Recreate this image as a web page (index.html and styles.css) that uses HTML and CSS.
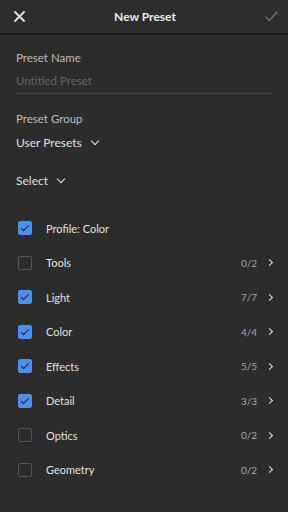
FILE: index.html
```html
<!DOCTYPE html>
<html lang="en">
<head>
  <meta charset="UTF-8" />
  <title>New Preset</title>
  <meta name="viewport" content="width=device-width, initial-scale=1" />
  <link rel="stylesheet" href="styles.css">
</head>
<body>
  <header class="top-bar">
    <button class="icon-btn" aria-label="Close">
      <svg width="11" height="11" viewBox="0 0 11 11"><path d="M1 1L10 10M10 1L1 10" stroke="#e6e6e6" stroke-width="1.8" stroke-linecap="round"/></svg>
    </button>
    <div class="title">New Preset</div>
    <button class="icon-btn" aria-label="Done">
      <svg width="13" height="11" viewBox="0 0 13 11"><path d="M1 6L4.5 9.5L12 1" fill="none" stroke="#6e6e6e" stroke-width="1.5" stroke-linecap="round" stroke-linejoin="round"/></svg>
    </button>
  </header>

  <main class="content">
    <div class="field">
      <div class="field-label">Preset Name</div>
      <div class="text-input">Untitled Preset</div>
    </div>

    <div class="field group">
      <div class="field-label">Preset Group</div>
      <div class="dropdown">User Presets <span class="chev-down"></span></div>
    </div>

    <div class="dropdown select">Select <span class="chev-down"></span></div>

    <ul class="settings">
      <li class="row"><span class="check on"></span><span class="name">Profile: Color</span></li>
      <li class="row"><span class="check"></span><span class="name">Tools</span><span class="count">0/2</span><span class="chev-right"></span></li>
      <li class="row"><span class="check on"></span><span class="name">Light</span><span class="count">7/7</span><span class="chev-right"></span></li>
      <li class="row"><span class="check on"></span><span class="name">Color</span><span class="count">4/4</span><span class="chev-right"></span></li>
      <li class="row"><span class="check on"></span><span class="name">Effects</span><span class="count">5/5</span><span class="chev-right"></span></li>
      <li class="row"><span class="check on"></span><span class="name">Detail</span><span class="count">3/3</span><span class="chev-right"></span></li>
      <li class="row"><span class="check"></span><span class="name">Optics</span><span class="count">0/2</span><span class="chev-right"></span></li>
      <li class="row"><span class="check"></span><span class="name">Geometry</span><span class="count">0/2</span><span class="chev-right"></span></li>
    </ul>
  </main>
</body>
</html>
```

FILE: styles.css
```css
:root {
  --bg: #2c2c2c;
  --header-bg: #2e2e2e;
  --divider: #1c1c1c;
  --text: #e0e0e0;
  --label: #bdbdbd;
  --muted: #666;
  --blue: #4b8ff0;
}

* {
  box-sizing: border-box;
  margin: 0;
  padding: 0;
}

body {
  font-family: 'Lato', 'Noto Sans', sans-serif;
  background: var(--bg);
  color: var(--text);
  width: 288px;
  height: 512px;
  overflow: hidden;
}

.top-bar {
  height: 35px;
  background: var(--header-bg);
  border-bottom: 2px solid var(--divider);
  display: flex;
  align-items: center;
  justify-content: space-between;
  padding: 0 10px 0 12px;
}

.icon-btn {
  background: none;
  border: none;
  width: 14px;
  height: 14px;
  display: flex;
  align-items: center;
  justify-content: center;
}

.title {
  font-size: 12px;
  font-weight: 700;
  color: #ececec;
}

.content {
  padding: 0 16px;
}

.field {
  padding-top: 15px;
}

.field-label {
  font-size: 11.5px;
  line-height: 16px;
  color: var(--label);
}

.text-input {
  font-size: 11.5px;
  line-height: 16px;
  color: var(--muted);
  margin-top: 7px;
  padding-bottom: 4px;
  border-bottom: 1px solid #464646;
}

.group {
  padding-top: 17px;
}

.dropdown {
  display: flex;
  align-items: center;
  gap: 8px;
  font-size: 12px;
  line-height: 18px;
  color: var(--text);
  margin-top: 7px;
}

.select {
  margin-top: 20px;
}

.chev-down {
  width: 6px;
  height: 6px;
  border-right: 1.8px solid #e6e6e6;
  border-bottom: 1.8px solid #e6e6e6;
  transform: translateY(-2px) rotate(45deg);
  margin-left: 2px;
}

.settings {
  list-style: none;
  margin-top: 21px;
}

.row {
  height: 34.5px;
  display: flex;
  align-items: center;
}

.check {
  width: 14px;
  height: 14px;
  margin-left: 2px;
  border: 1px solid #555;
  border-radius: 2px;
  position: relative;
}

.check.on {
  background: var(--blue);
  border-color: var(--blue);
}

.check.on::after {
  content: '';
  position: absolute;
  left: 4px;
  top: 1px;
  width: 3px;
  height: 7px;
  border-right: 1.6px solid #1a1a1a;
  border-bottom: 1.6px solid #1a1a1a;
  transform: rotate(45deg);
}

.name {
  flex: 1;
  margin-left: 14px;
  font-size: 11px;
  color: var(--text);
}

.count {
  font-size: 10px;
  color: #a8a8a8;
  margin-right: 10px;
}

.chev-right {
  width: 5px;
  height: 5px;
  border-right: 1.8px solid #e6e6e6;
  border-top: 1.8px solid #e6e6e6;
  transform: rotate(45deg);
}
```
